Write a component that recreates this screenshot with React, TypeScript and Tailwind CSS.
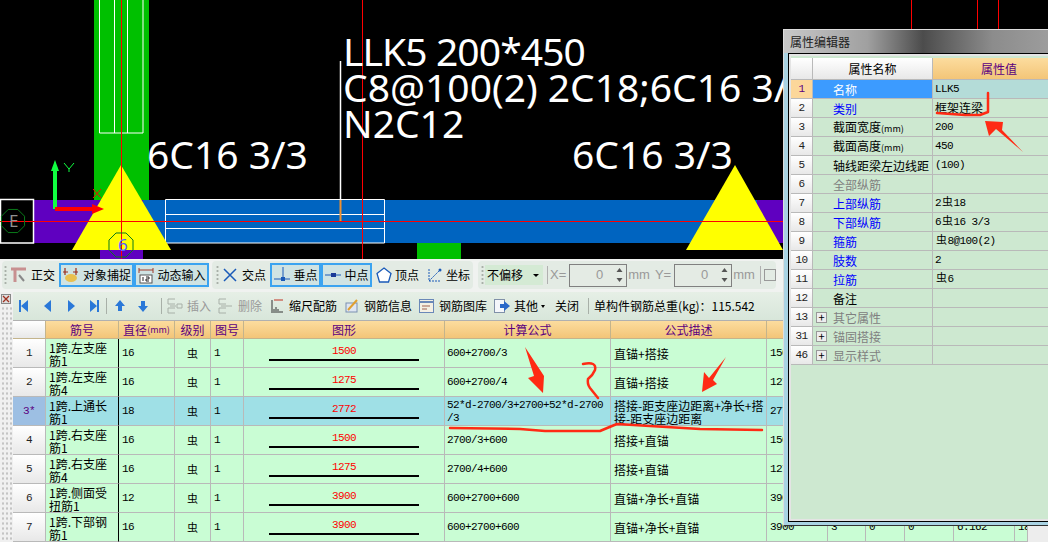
import type { ReactNode } from 'react';

const mono = "font-['Liberation_Mono','Noto_Sans_CJK_SC',monospace] text-[11px] tracking-[-0.6px]";
const line = 'border-r border-b border-[#b9b9b9]';
const gridCols =
  'grid grid-cols-[33px_73px_56px_36px_33px_201px_166px_156px_61px_38px_39px_49px_61px_13px]';

interface Row {
  no: string;
  name: ReactNode;
  dia: string;
  shape: string;
  formula: ReactNode;
  desc: ReactNode;
  len: string;
  selected?: boolean;
  extra?: string[];
}

const rows: Row[] = [
  { no: '1', name: <>1跨.左支座<br />筋1</>, dia: '16', shape: '1500', formula: '600+2700/3', desc: '直锚+搭接', len: '1500' },
  { no: '2', name: <>1跨.左支座<br />筋4</>, dia: '16', shape: '1275', formula: '600+2700/4', desc: '直锚+搭接', len: '1275' },
  {
    no: '3*',
    name: <>1跨.上通长<br />筋1</>,
    dia: '18',
    shape: '2772',
    formula: <>52*d-2700/3+2700+52*d-2700<br />/3</>,
    desc: <>搭接-距支座边距离+净长+搭<br />接-距支座边距离</>,
    len: '2772',
    selected: true,
  },
  { no: '4', name: <>1跨.右支座<br />筋1</>, dia: '16', shape: '1500', formula: '2700/3+600', desc: '搭接+直锚', len: '1500' },
  { no: '5', name: <>1跨.右支座<br />筋4</>, dia: '16', shape: '1275', formula: '2700/4+600', desc: '搭接+直锚', len: '1275' },
  { no: '6', name: <>1跨.侧面受<br />扭筋1</>, dia: '12', shape: '3900', formula: '600+2700+600', desc: '直锚+净长+直锚', len: '3900' },
  {
    no: '7',
    name: <>1跨.下部钢<br />筋1</>,
    dia: '16',
    shape: '3900',
    formula: '600+2700+600',
    desc: '直锚+净长+直锚',
    len: '3900',
    extra: ['3', '0', '0', '6.162', '18'],
  },
];

const Mm = () => <span className="text-[9px]">(mm)</span>;
const Bar = () => <span className="mx-[1px] text-[11px]">虫</span>;

const headers: ReactNode[] = [
  '',
  '筋号',
  <>直径<Mm /></>,
  '级别',
  '图号',
  '图形',
  '计算公式',
  '公式描述',
  '长度',
  '',
  '',
  '',
  '',
  '',
];

interface Prop {
  no: string;
  name: ReactNode;
  value?: ReactNode;
  color: string;
  plus?: boolean;
  cjk?: boolean;
}

const props: Prop[] = [
  { no: '1', name: '名称', value: 'LLK5', color: 'text-white' },
  { no: '2', name: '类别', value: '框架连梁', color: 'text-[#0000ff]', cjk: true },
  { no: '3', name: <>截面宽度<Mm /></>, value: '200', color: 'text-black' },
  { no: '4', name: <>截面高度<Mm /></>, value: '450', color: 'text-black' },
  { no: '5', name: '轴线距梁左边线距', value: '(100)', color: 'text-black' },
  { no: '6', name: '全部纵筋', color: 'text-[#808080]' },
  { no: '7', name: '上部纵筋', value: <>2<Bar />18</>, color: 'text-[#0000ff]' },
  { no: '8', name: '下部纵筋', value: <>6<Bar />16 3/3</>, color: 'text-[#0000ff]' },
  { no: '9', name: '箍筋', value: <><Bar />8@100(2)</>, color: 'text-[#0000ff]' },
  { no: '10', name: '肢数', value: '2', color: 'text-[#0000ff]' },
  { no: '11', name: '拉筋', value: <><Bar />6</>, color: 'text-[#0000ff]' },
  { no: '12', name: '备注', color: 'text-black' },
  { no: '13', name: '其它属性', color: 'text-[#808080]', plus: true },
  { no: '31', name: '锚固搭接', color: 'text-[#808080]', plus: true },
  { no: '46', name: '显示样式', color: 'text-[#808080]', plus: true },
];

function Octagon({ cx, cy, r }: { cx: number; cy: number; r: number }) {
  const pts = Array.from({ length: 8 }, (_, i) => {
    const a = Math.PI / 8 + (i * Math.PI) / 4;
    return `${cx + r * Math.cos(a)},${cy + r * Math.sin(a)}`;
  }).join(' ');
  return <polygon points={pts} fill="none" stroke="#0a7a1a" strokeWidth="1" />;
}

function CadCanvas() {
  return (
    <div className="relative h-[259px] w-[1048px] shrink-0 overflow-hidden bg-black font-['Noto_Sans',sans-serif] text-white">
      <svg className="absolute inset-0" width="1048" height="259">
        <rect x="94" y="0" width="55" height="201" fill="#00c000" />
        <path d="M99.5 0V133H143V0M114.5 0V133M127.5 0V133" fill="none" stroke="#fff" strokeWidth="1" />
        <rect x="34" y="200" width="112" height="43" fill="#5f00c0" />
        <rect x="143" y="200" width="616" height="43" fill="#0064c0" />
        <rect x="757" y="200" width="26" height="43" fill="#5f00c0" />
        <rect x="100" y="243" width="43" height="16" fill="#5f00c0" />
        <rect x="417" y="243" width="44" height="16" fill="#00c000" />
        <path d="M165.5 199.5H384.5V243H165.5ZM165.5 214.5H384.5M165.5 228.5H384.5" fill="none" stroke="#fff" strokeWidth="1" />
        <rect x="0.5" y="199.5" width="33" height="43.5" fill="#000" stroke="#fff" strokeWidth="1.5" />
        <polygon points="121,165 171,250 72,250" fill="#ffff00" />
        <polygon points="735,165 783,250 686,250" fill="#ffff00" />
        <path d="M340.5 61V200" stroke="#fff" strokeWidth="1.5" />
        <path d="M340.5 200V221" stroke="#f09030" strokeWidth="2" />
        <path d="M0 221.5H783" stroke="#ff0000" strokeWidth="1" />
        <path d="M121.5 0V259M362.5 0V259M911.5 0V29M977.5 0V29M998.5 0V29" stroke="#ff0000" strokeWidth="1" />
        <Octagon cx={13} cy={221} r={12.5} />
        <Octagon cx={121} cy={245} r={13} />
        <path d="M55 209V169" stroke="#10ff40" strokeWidth="4" />
        <polygon points="55,160 59,171 51,171" fill="#10ff40" />
        <path d="M64 163L69 169L74 163M69 169V172" fill="none" stroke="#10ff40" strokeWidth="1" />
        <path d="M55 209H96" stroke="#ff0000" strokeWidth="4" />
        <polygon points="104,209 92,204 92,214" fill="#ff0000" />
        <path d="M93 189L101 198M101 189L93 198" stroke="#ff0000" strokeWidth="1" />
      </svg>
      <span className="absolute left-[9px] top-[211px] text-[17px] leading-[20px] text-[#909090]">E</span>
      <span className="absolute left-[118px] top-[235px] text-[17px] leading-[20px] text-[#5060ff]">6</span>
      <span className="absolute left-[343px] top-[28px] text-[39px] leading-[45px] tracking-[-0.9px] whitespace-nowrap">LLK5 200*450</span>
      <span className="absolute left-[343px] top-[64px] text-[39px] leading-[45px] whitespace-nowrap">C8@100(2) 2C18;6C16 3/3</span>
      <span className="absolute left-[343px] top-[100px] text-[39px] leading-[45px] whitespace-nowrap">N2C12</span>
      <span className="absolute left-[147px] top-[131px] text-[39px] leading-[45px] whitespace-nowrap">6C16 3/3</span>
      <span className="absolute left-[572px] top-[131px] text-[39px] leading-[45px] whitespace-nowrap">6C16 3/3</span>
    </div>
  );
}

function Grip() {
  return <div className="h-[20px] w-[3px] bg-[radial-gradient(circle,#a8b0a8_1px,transparent_1.2px)] bg-[length:3px_4px]" />;
}

function Spinner({ value }: { value: string }) {
  return (
    <div className="flex h-[23px] w-[58px] items-center justify-between border border-[#808080] bg-[#e4ebe4] pl-[2px] pr-[3px]">
      <span className="ml-auto mr-[13px] font-['Liberation_Sans',sans-serif] text-[13px] text-[#999]">{value}</span>
      <svg width="7" height="16" viewBox="0 0 7 16">
        <path d="M3.5 1L6.5 5H0.5ZM3.5 15L0.5 11H6.5Z" fill="#555" />
      </svg>
    </div>
  );
}

function PressedBtn({ icon, label, width }: { icon: ReactNode; label: string; width: string }) {
  return (
    <div className={`flex h-[24px] items-center justify-center gap-[4px] border-2 border-[#3ba3f0] bg-[#cfe3e3] ${width}`}>
      {icon}
      <span>{label}</span>
    </div>
  );
}

function TopToolbar() {
  return (
    <div className="flex h-[33px] shrink-0 items-start gap-[3px] bg-[#f0f2f0] pl-[2px] pt-[2px]">
      <div className="flex h-[28px] w-[207px] items-center rounded-[4px] bg-[#e3ebe4]">
        <div className="ml-[2px] mr-[3px]"><Grip /></div>
        <svg width="17" height="17" viewBox="0 0 17 17">
          <path d="M1 2H16M5 2V15" stroke="#c89090" strokeWidth="3" fill="none" />
          <path d="M9 8L14 14" stroke="#888" strokeWidth="2" />
        </svg>
        <span className="ml-[4px] mr-[4px]">正交</span>
        <PressedBtn
          width="w-[75px]"
          label="对象捕捉"
          icon={
            <svg width="17" height="17" viewBox="0 0 17 17">
              <path d="M3 1V8M14 1V8M1 5H6M11 5H16" stroke="#9a2a1a" strokeWidth="1.2" />
              <ellipse cx="9" cy="11" rx="6" ry="4" fill="#e8c050" />
            </svg>
          }
        />
        <PressedBtn
          width="w-[75px]"
          label="动态输入"
          icon={
            <svg width="16" height="17" viewBox="0 0 16 17">
              <path d="M1 3H15M1 1V6M15 1V6" stroke="#a03a2a" strokeWidth="1" fill="none" />
              <rect x="2" y="8" width="12" height="8" fill="#fff" stroke="#555" />
              <path d="M5 10V14M8 10H11V12H8V14H11" stroke="#222" strokeWidth="1" fill="none" />
            </svg>
          }
        />
      </div>
      <div className="flex h-[28px] w-[261px] items-center rounded-[4px] bg-[#e3ebe4]">
        <div className="ml-[4px] mr-[3px]"><Grip /></div>
        <svg width="16" height="16" viewBox="0 0 16 16">
          <path d="M2 2L14 14M14 2L2 14" stroke="#1a5ab8" strokeWidth="1.5" />
        </svg>
        <span className="ml-[4px] mr-[4px]">交点</span>
        <PressedBtn
          width="w-[51px]"
          label="垂点"
          icon={
            <svg width="16" height="16" viewBox="0 0 16 16">
              <path d="M0 12H16M9 0V12" stroke="#1a5ab8" strokeWidth="1" />
              <rect x="7" y="10" width="4" height="4" fill="#1a5ab8" />
            </svg>
          }
        />
        <PressedBtn
          width="w-[51px]"
          label="中点"
          icon={
            <svg width="16" height="16" viewBox="0 0 16 16">
              <path d="M0 8H16" stroke="#1a5ab8" strokeWidth="1" />
              <rect x="6" y="6" width="5" height="4" fill="#1a3a98" />
            </svg>
          }
        />
        <svg className="ml-[4px]" width="16" height="16" viewBox="0 0 16 16">
          <polygon points="8,1 15,6.5 12.5,15 3.5,15 1,6.5" fill="#fff" stroke="#1a5ab8" strokeWidth="1.3" />
        </svg>
        <span className="ml-[3px]">顶点</span>
        <svg className="ml-[8px]" width="16" height="16" viewBox="0 0 16 16">
          <path d="M2 2V14H14M2 14L13 3" stroke="#1a5ab8" strokeWidth="1" strokeDasharray="2 1" fill="none" />
          <circle cx="13" cy="3" r="1.5" fill="#1a5ab8" />
        </svg>
        <span className="ml-[3px]">坐标</span>
      </div>
      <div className="ml-[2px] flex h-[28px] w-[298px] items-center rounded-[4px] bg-[#e3ebe4] text-[#999]">
        <div className="ml-[3px] mr-[1px]"><Grip /></div>
        <div className="flex h-[20px] w-[58px] items-center justify-between bg-[#d4ead4] pl-[2px] pr-[4px] text-black">
          <span>不偏移</span>
          <span className="h-0 w-0 border-x-[3px] border-t-[3px] border-x-transparent border-t-black" />
        </div>
        <div className="ml-[4px] mr-[2px] h-[18px] w-px bg-[#b0b0b0]" />
        <span className="mr-[3px] font-['Liberation_Sans',sans-serif] text-[13px]">X=</span>
        <Spinner value="0" />
        <span className="ml-[1px] mr-[5px] font-['Liberation_Sans',sans-serif] text-[13px]">mm</span>
        <span className="mr-[3px] font-['Liberation_Sans',sans-serif] text-[13px]">Y=</span>
        <Spinner value="0" />
        <span className="ml-[1px] font-['Liberation_Sans',sans-serif] text-[13px]">mm</span>
        <div className="ml-[5px] mr-[3px] h-[18px] w-px bg-[#b0b0b0]" />
        <div className="h-[12px] w-[12px] border border-[#999]" />
      </div>
    </div>
  );
}

function NavIcon({ d, className }: { d: string; className: string }) {
  return (
    <svg className={className} width="12" height="14" viewBox="0 0 12 14">
      <path d={d} fill="#2a78d8" />
    </svg>
  );
}

function Sep({ className }: { className: string }) {
  return <div className={`h-[16px] w-px bg-[#a8b0a8] ${className}`} />;
}

function SecondToolbar() {
  return (
    <div className="flex h-[28px] shrink-0 items-center bg-[linear-gradient(#e6efe6,#d8e6da)] pl-[5px]">
      <NavIcon className="" d="M1 1H3V13H1ZM10 1V13L3 7Z" />
      <NavIcon className="ml-[12px]" d="M9 1V13L2 7Z" />
      <NavIcon className="ml-[11px]" d="M3 1V13L10 7Z" />
      <NavIcon className="ml-[12px]" d="M1 1L8 7L1 13ZM8 1H10V13H8Z" />
      <Sep className="ml-[5px]" />
      <NavIcon className="ml-[7px]" d="M6 1L11 7H8V12H4V7H1Z" />
      <NavIcon className="ml-[11px]" d="M6 13L11 7H8V2H4V7H1Z" />
      <Sep className="ml-[12px]" />
      <svg className="ml-[5px]" width="16" height="16" viewBox="0 0 16 16">
        <path d="M8 1H1V6H8M8 10H1V15H8M3 8H9M10 6H15V10H10Z" fill="none" stroke="#a8b0a8" />
      </svg>
      <span className="ml-[4px] text-[#999]">插入</span>
      <svg className="ml-[7px]" width="16" height="16" viewBox="0 0 16 16">
        <path d="M8 1H1V6H8M8 10H1V15H8M3 8H14" fill="none" stroke="#a8b0a8" />
      </svg>
      <span className="ml-[4px] text-[#999]">删除</span>
      <svg className="ml-[9px]" width="13" height="16" viewBox="0 0 13 16">
        <path d="M1 2V15M3 15V11M5 15V9M7 15V11M9 15V13M11 15V13" stroke="#333" fill="none" />
        <path d="M3 2H12" stroke="#c03020" />
      </svg>
      <span className="ml-[5px]">缩尺配筋</span>
      <svg className="ml-[8px]" width="14" height="14" viewBox="0 0 14 14">
        <rect x="1" y="4" width="11" height="9" fill="#dfe6f2" stroke="#7a90b0" />
        <path d="M3 11L12 1" stroke="#e0a030" strokeWidth="2" />
      </svg>
      <span className="ml-[5px]">钢筋信息</span>
      <svg className="ml-[7px]" width="15" height="14" viewBox="0 0 15 14">
        <rect x="0.5" y="0.5" width="14" height="13" fill="#f4f0e4" stroke="#6a88b8" />
        <path d="M1 3H14" stroke="#6a88b8" strokeWidth="2" />
        <path d="M3 7H11M3 10H8" stroke="#a06050" />
      </svg>
      <span className="ml-[5px]">钢筋图库</span>
      <svg className="ml-[7px]" width="16" height="14" viewBox="0 0 16 14">
        <rect x="0.5" y="0.5" width="10" height="13" fill="#f4f6fa" stroke="#8090a8" />
        <path d="M6 5H10V2L16 7L10 12V9H6Z" fill="#2a68c8" />
      </svg>
      <span className="ml-[4px]">其他</span>
      <span className="ml-[3px] h-0 w-0 border-x-[2.5px] border-t-[3px] border-x-transparent border-t-black" />
      <span className="ml-[10px]">关闭</span>
      <Sep className="ml-[9px]" />
      <span className="ml-[5px] whitespace-nowrap">单构件钢筋总重(kg)：115.542</span>
    </div>
  );
}

function RebarTable() {
  return (
    <div className="flex flex-1 border-t border-[#b0b0b0]">
      <div className="w-[1015px]">
        <div className={`${gridCols} h-[18px]`}>
          {headers.map((h, i) => (
            <div
              key={i}
              className={`flex items-center justify-center overflow-hidden whitespace-nowrap border-r border-b border-[#c4b48c] text-[#5b0080] ${
                i === 0 ? 'bg-[linear-gradient(#ffffff,#e8e8e8)]' : 'bg-[linear-gradient(#fcdc9e,#f3c578)]'
              }`}
            >
              {h}
            </div>
          ))}
        </div>
        {rows.map((r) => {
          const bg = r.selected ? 'bg-[#9fe0e6]' : 'bg-[#c9fdd4]';
          const extra = r.extra ?? ['', '', '', '', ''];
          return (
            <div key={r.no} className={`${gridCols} h-[29px]`}>
              <div
                className={`flex items-center justify-center ${line} ${mono} ${
                  r.selected ? 'bg-[#9dbfe3] text-[#5b0080]' : 'bg-[linear-gradient(#ffffff,#e8e8e8)] text-[#222]'
                }`}
              >
                {r.no}
              </div>
              <div className={`overflow-hidden whitespace-nowrap border-r border-b border-r-black border-b-[#b9b9b9] pl-[3px] pt-[2px] leading-[13px] ${bg}`}>
                {r.name}
              </div>
              <div className={`flex items-center pl-[3px] ${line} ${mono} ${bg}`}>{r.dia}</div>
              <div className={`flex items-center justify-center text-[11px] ${line} ${bg}`}>虫</div>
              <div className={`flex items-center pl-[3px] ${line} ${mono} ${bg}`}>1</div>
              <div className={`flex flex-col items-center pt-[5px] ${line} ${bg}`}>
                <span className={`h-[15px] leading-[14px] text-[#ff0000] ${mono}`}>{r.shape}</span>
                <div className="h-[2px] w-[150px] bg-black" />
              </div>
              <div className={`flex items-center whitespace-nowrap pl-[2px] pt-[1px] leading-[13px] ${line} ${mono} ${bg}`}>
                <div>{r.formula}</div>
              </div>
              <div className={`flex items-center whitespace-nowrap pl-[3px] pt-[1px] leading-[13px] ${line} ${bg}`}>
                <div>{r.desc}</div>
              </div>
              <div className={`flex items-center overflow-hidden pl-[3px] ${line} ${mono} ${bg}`}>{r.len}</div>
              {extra.map((v, i) => (
                <div key={i} className={`flex items-center overflow-hidden pl-[3px] ${line} ${mono} ${bg}`}>
                  {v}
                </div>
              ))}
            </div>
          );
        })}
      </div>
      <div className="flex-1 bg-[#ededed]" />
    </div>
  );
}

function PropertyWindow() {
  return (
    <div className="absolute left-[783px] top-[29px] flex h-[497px] w-[280px] flex-col border border-[#333] border-t-[#ddd] border-l-[#ddd] bg-[#a9d3e3]">
      <div className="flex h-[23px] shrink-0 items-center bg-[linear-gradient(90deg,#c8c8c8,#a0a0a0_30%,#4c4c4c_50%,#8c8c8c_75%,#a0a0a0)] pl-[6px] text-[#222]">
        属性编辑器
      </div>
      <div className="mb-[3px] ml-[4px] flex-1 border border-black">
        <div className="h-full border-2 border-[#e4e4e4] bg-[#cde8d0] pt-[2px]">
          <div className="grid h-[22px] grid-cols-[22px_120px_1fr]">
            <div className={`${line} bg-[linear-gradient(#ffffff,#e8e8e8)]`} />
            <div className={`flex items-center justify-center ${line} bg-[linear-gradient(#ffffff,#e8e8e8)]`}>属性名称</div>
            <div className="flex items-center justify-start border-b border-[#b9b9b9] bg-[linear-gradient(#fcdc9e,#f3c578)] pl-[48px] text-[#5b0080]">
              属性值
            </div>
          </div>
          {props.map((p, i) => (
            <div key={p.no} className="grid h-[19px] grid-cols-[22px_120px_1fr]">
              <div
                className={`flex items-center justify-center ${line} ${mono} ${
                  i === 0 ? 'bg-[#fcd79a] text-[#5b0080]' : 'bg-[linear-gradient(#ffffff,#e8e8e8)] text-[#222]'
                }`}
              >
                {p.no}
              </div>
              <div className={`flex items-center overflow-hidden whitespace-nowrap ${line} ${p.color} ${i === 0 ? 'bg-[#3c9bff]' : ''}`}>
                {p.plus ? (
                  <span className="ml-[3px] flex h-[11px] w-[11px] items-center justify-center border border-[#999] bg-[#eee] text-[11px] leading-none text-black">
                    +
                  </span>
                ) : (
                  <span className="ml-[3px] w-[11px]" />
                )}
                <span className="ml-[6px] pt-[2px]">{p.name}</span>
              </div>
              <div
                className={`flex items-center whitespace-pre border-b border-[#b9b9b9] pl-[2px] ${p.cjk ? '' : mono} ${
                  i === 0 ? 'bg-[#b4dcd8]' : ''
                }`}
              >
                {p.value}
              </div>
            </div>
          ))}
        </div>
      </div>
    </div>
  );
}

function Annotations() {
  return (
    <svg className="pointer-events-none absolute inset-0" width="1048" height="542">
      <g fill="#ff2a14">
        <polygon points="525,347 544,376 543,393 528,378 534,376" />
        <polygon points="726,357 713,380 717,384 702,392 704,372 709,378" />
        <polygon points="1023,152 1002,130 1003,122 985,121 989,136 996,129" />
      </g>
      <g fill="none" stroke="#ff2a14" strokeLinecap="round" strokeLinejoin="round">
        <path d="M583 364Q597 361 595 370Q593 375 588 379Q587 384 590 388L598 398" strokeWidth="2.5" />
        <path d="M450 428L520 429L545 431L600 431L612 426L617 424L650 426L700 429L762 430" strokeWidth="2.5" />
        <path d="M937 113L965 115L980 115L988 112L988 93" strokeWidth="2.5" />
      </g>
    </svg>
  );
}

export default function App() {
  return (
    <div className="relative flex h-[542px] w-[1048px] flex-col overflow-hidden bg-[#f0f2f0] font-['Noto_Sans_CJK_SC',sans-serif] text-[12px] leading-[14px] text-black">
      <CadCanvas />
      <TopToolbar />
      <div className="flex flex-1">
        <div className="flex w-[13px] shrink-0 flex-col bg-[#f0f0f0]">
          <div className="ml-[1px] mt-[2px] flex h-[10px] w-[10px] items-center justify-center border border-[#888] bg-[#ddd]">
            <svg width="8" height="8" viewBox="0 0 8 8">
              <path d="M1 1L7 7M7 1L1 7" stroke="#a03020" strokeWidth="1.3" />
            </svg>
          </div>
          <div className="ml-[1px] mt-[2px] flex-1 bg-[radial-gradient(circle,#c4c4c4_1px,transparent_1.3px)] bg-[length:4px_5px]" />
        </div>
        <div className="flex min-w-0 flex-1 flex-col">
          <SecondToolbar />
          <RebarTable />
        </div>
      </div>
      <PropertyWindow />
      <Annotations />
    </div>
  );
}
